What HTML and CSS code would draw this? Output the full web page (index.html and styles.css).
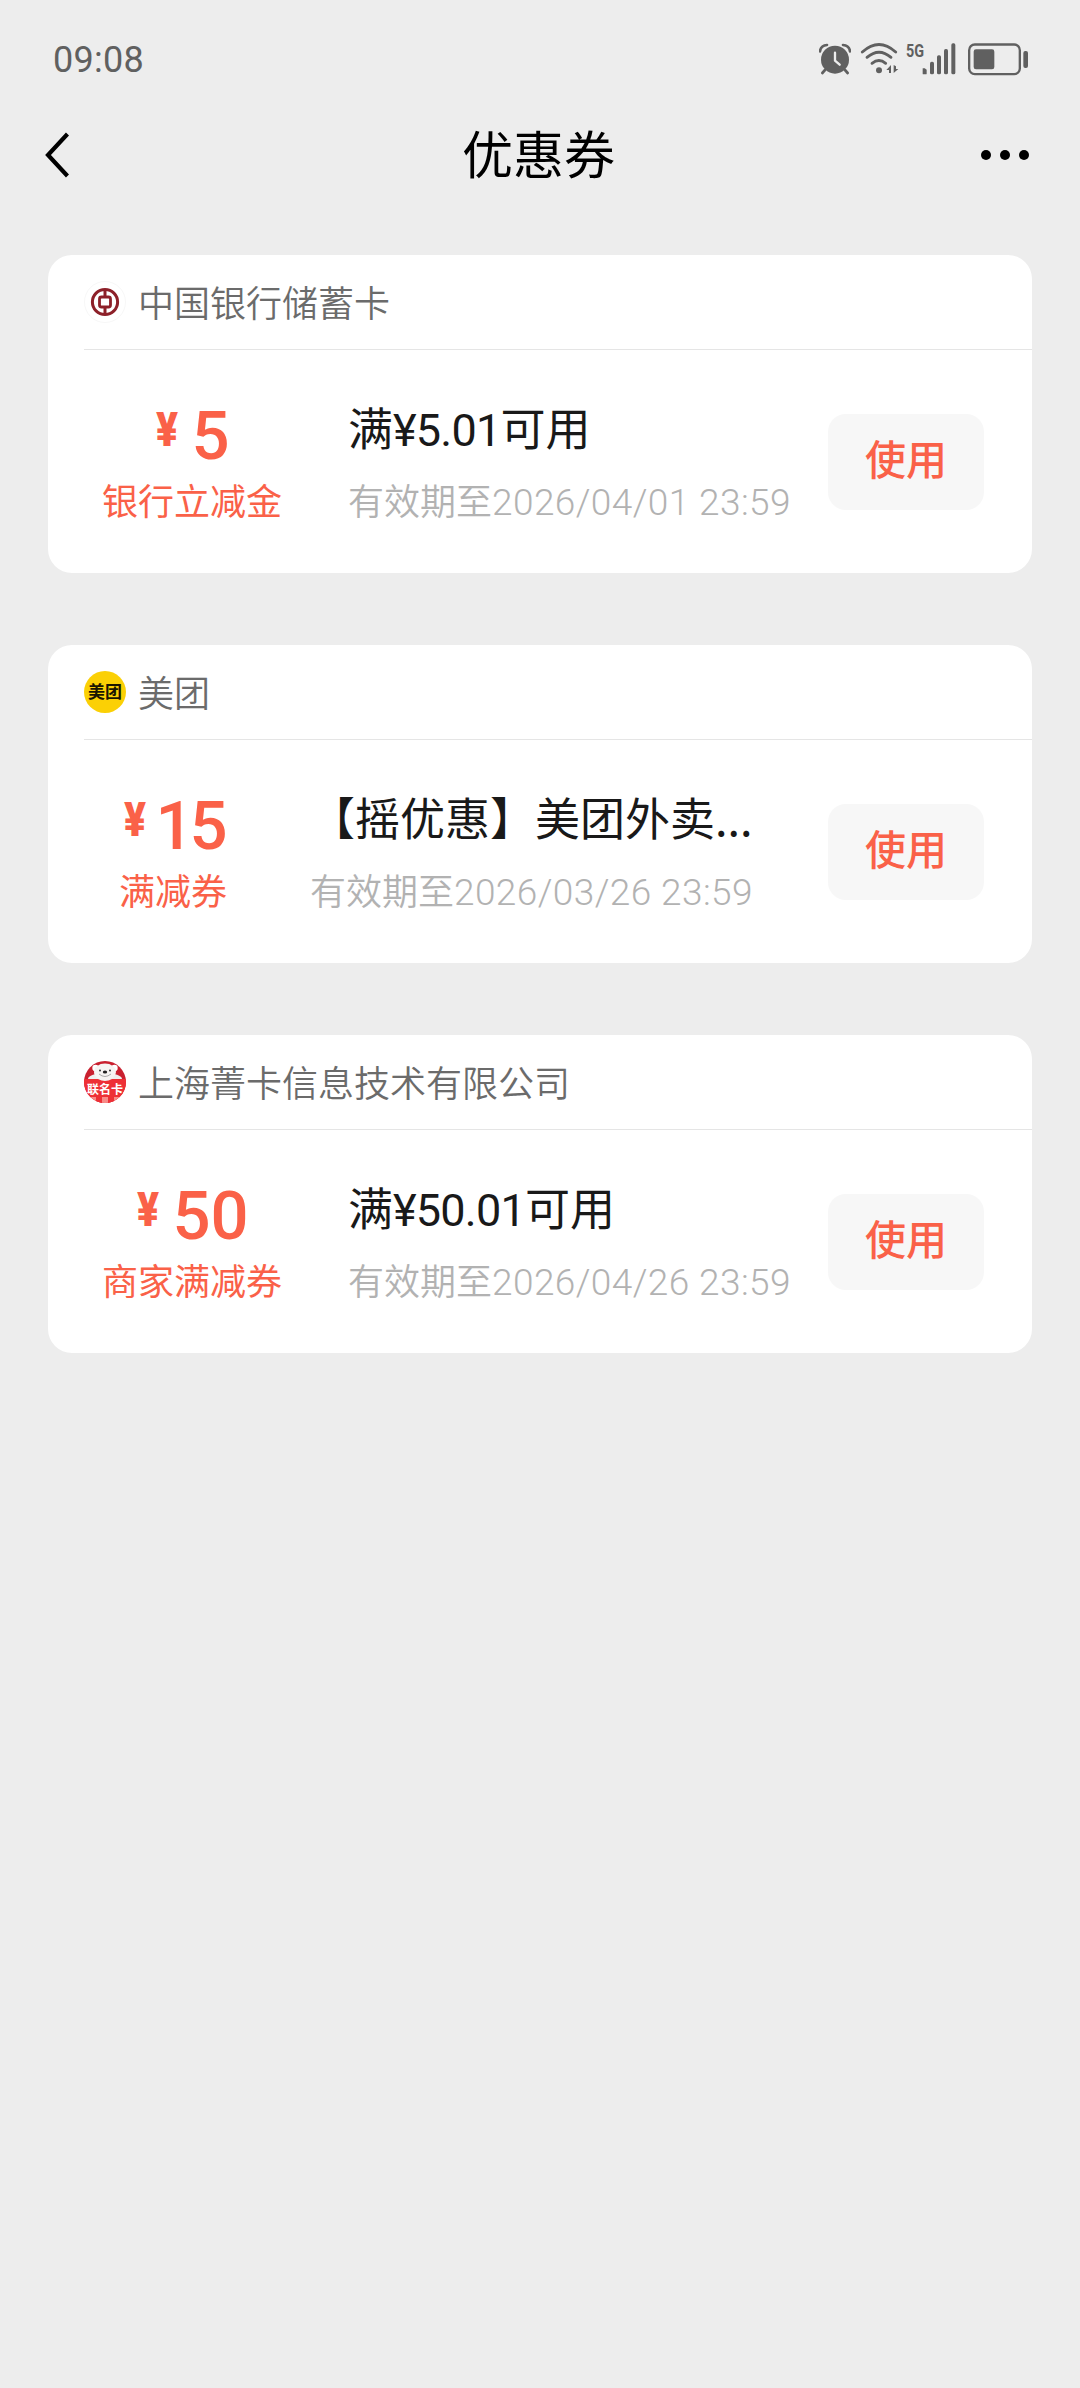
FILE: index.html
```html
<!DOCTYPE html>
<html lang="zh-CN">
<head>
<meta charset="utf-8">
<title>优惠券</title>
<link rel="stylesheet" href="styles.css">
</head>
<body>
<div class="status-bar">
  <span class="time">09:08</span>
  <div class="status-icons">
    <svg class="alarm" viewBox="54 40 96 96" width="32" height="32">
      <circle cx="102" cy="90" r="42" fill="#606060"/>
      <path d="M57 65Q59 48 78 46M147 65Q145 48 126 46" fill="none" stroke="#606060" stroke-width="8" stroke-linecap="round"/>
      <path d="M72 121L64 130M132 121L140 130" stroke="#606060" stroke-width="8" stroke-linecap="round"/>
      <path d="M102 69V93L116 105" fill="none" stroke="#ededed" stroke-width="7" stroke-linecap="round" stroke-linejoin="round"/>
    </svg>
    <svg class="wifi" viewBox="177 37 117 99" width="39" height="33">
      <g fill="none" stroke="#606060" stroke-width="8.500" stroke-linecap="round">
        <path d="M184 67Q234 22 284 67"/>
        <path d="M198 83Q234 52 270 83"/>
        <path d="M213 101Q234 84 254 101"/>
      </g>
      <circle cx="234" cy="122" r="9" fill="#606060"/>
      <path d="M270 106V130H264V121H256ZM278 106V130L292 118H285V110Z" fill="#606060"/>
    </svg>
    <span class="network">5G</span>
    <svg class="signal" viewBox="366 39 102 96" width="34" height="32">
      <g fill="#606060">
        <path d="M368 115H374L380 119V131Q380 133 378 133H370Q368 133 368 131Z"/>
        <rect x="390" y="95" width="12" height="38" rx="5"/>
        <rect x="411" y="76" width="12" height="57" rx="5"/>
        <rect x="432" y="57" width="12" height="76" rx="5"/>
        <rect x="454" y="40" width="12" height="93" rx="5"/>
      </g>
    </svg>
    <svg class="battery" viewBox="504 39 183 99" width="61" height="33">
      <rect x="507.500" y="43.500" width="152" height="89" rx="17" fill="none" stroke="#606060" stroke-width="7"/>
      <rect x="521" y="58" width="62" height="60" rx="7" fill="#606060"/>
      <rect x="670" y="63" width="14" height="51" rx="6" fill="#606060"/>
    </svg>
  </div>
</div>

<header class="nav">
  <svg class="back" viewBox="0 0 24 46" width="24" height="46"><path d="M22.500 2L3 23L22.500 44" fill="none" stroke="#000" stroke-width="4.200"/></svg>
  <h1>优惠券</h1>
  <div class="more"><i></i><i></i><i></i></div>
</header>

<main class="coupons">
  <section class="coupon">
    <div class="merchant">
      <svg class="logo" viewBox="0 0 42 42" width="42" height="42">
        <circle cx="21" cy="21" r="20.500" fill="#fff" stroke="#f7f7f7"/>
        <g fill="none" stroke="#8d2029">
          <circle cx="21" cy="21" r="12.600" stroke-width="3"/>
          <rect x="15.500" y="16" width="11" height="10" rx="2" stroke-width="2.800"/>
          <path d="M21 8V16M21 26V34" stroke-width="3"/>
        </g>
      </svg>
      <span class="name">中国银行储蓄卡</span>
    </div>
    <div class="body">
      <div class="value">
        <div class="amount"><span class="yen">¥</span><span class="num">5</span></div>
        <div class="kind">银行立减金</div>
      </div>
      <div class="info">
        <div class="title">满<span class="latin">¥5.01</span>可用</div>
        <div class="expiry">有效期至<span class="latin">2026/04/01 23:59</span></div>
      </div>
      <button class="use">使用</button>
    </div>
  </section>

  <section class="coupon">
    <div class="merchant">
      <svg class="logo" viewBox="0 0 42 42" width="42" height="42">
        <circle cx="21" cy="21" r="21" fill="#fbd005"/>
        <text x="21" y="26.500" class="logo-text meituan">美团</text>
      </svg>
      <span class="name">美团</span>
    </div>
    <div class="body">
      <div class="value">
        <div class="amount"><span class="yen">¥</span><span class="num tight">15</span></div>
        <div class="kind">满减券</div>
      </div>
      <div class="info">
        <div class="title">【摇优惠】美团外卖...</div>
        <div class="expiry">有效期至<span class="latin">2026/03/26 23:59</span></div>
      </div>
      <button class="use">使用</button>
    </div>
  </section>

  <section class="coupon">
    <div class="merchant">
      <svg class="logo" viewBox="0 0 42 42" width="42" height="42">
        <clipPath id="disc"><circle cx="21" cy="21" r="21"/></clipPath>
        <g clip-path="url(#disc)">
          <rect width="42" height="42" fill="#c9202f"/>
          <ellipse cx="21" cy="18" rx="17" ry="6" fill="#eee"/>
          <circle cx="11.500" cy="7" r="3.200" fill="#fff"/>
          <circle cx="30.500" cy="7" r="3.200" fill="#fff"/>
          <ellipse cx="21" cy="11" rx="11" ry="8.500" fill="#f6f4f3"/>
          <circle cx="16" cy="9.500" r="1" fill="#333"/>
          <circle cx="26" cy="9.500" r="1" fill="#333"/>
          <ellipse cx="21" cy="11" rx="2.200" ry="1.500" fill="#222"/>
          <path d="M15 13Q21 18 27 13" fill="none" stroke="#aaa" stroke-width="1"/>
          <path d="M0 18H14Q21 22 28 18H42V42H0Z" fill="#ee3036"/>
          <path d="M18 36H24V42H18ZM6 36H12V42H6ZM30 36H36V42H30Z" fill="#f88b88"/>
          <text x="21" y="33" class="logo-text card">联名卡</text>
        </g>
      </svg>
      <span class="name">上海菁卡信息技术有限公司</span>
    </div>
    <div class="body">
      <div class="value">
        <div class="amount"><span class="yen">¥</span><span class="num">50</span></div>
        <div class="kind">商家满减券</div>
      </div>
      <div class="info">
        <div class="title">满<span class="latin">¥50.01</span>可用</div>
        <div class="expiry">有效期至<span class="latin">2026/04/26 23:59</span></div>
      </div>
      <button class="use">使用</button>
    </div>
  </section>
</main>
</body>
</html>
```
FILE: styles.css
```css
* {
  box-sizing: border-box;
}

body {
  margin: 0;
  min-height: 2388px;
  background: #ededed;
  color: #191919;
  font-family: "Noto Sans CJK SC", sans-serif;
}

svg {
  display: block;
  flex: none;
}

.status-bar {
  display: flex;
  justify-content: space-between;
  height: 110px;
  padding: 43px 51px 0 53px;
}

.time {
  font: 400 36px/35px Roboto, sans-serif;
  letter-spacing: 0.3px;
  color: #606060;
}

.status-icons {
  display: flex;
  align-items: flex-start;
}

.wifi {
  margin-left: 9px;
  margin-top: -1px;
}

.network {
  width: 18px;
  margin-left: 7px;
  font: 700 18px/15px Roboto, sans-serif;
  color: #606060;
  transform: scaleX(0.8);
  transform-origin: left;
}

.signal {
  margin-left: -2px;
}

.battery {
  margin-left: 12px;
}

.nav {
  display: flex;
  align-items: center;
  justify-content: space-between;
  height: 90px;
  padding: 0 51px 0 45px;
}

.nav h1 {
  margin: 0;
  padding: 0 0 6px 27px;
  font-size: 51px;
  font-weight: 400;
  line-height: 60px;
  color: #000;
}

.more {
  display: flex;
  gap: 9px;
}

.more i {
  width: 10px;
  height: 10px;
  border-radius: 50%;
  background: #000;
}

.coupons {
  display: flex;
  flex-direction: column;
  gap: 72px;
  padding: 55px 48px 0;
}

.coupon {
  height: 318px;
  border-radius: 24px;
  background: #fff;
}

.merchant {
  display: flex;
  align-items: center;
  gap: 12px;
  height: 95px;
  margin-left: 36px;
  border-bottom: 1px solid #e5e5e5;
  font-size: 36px;
  font-weight: 350;
  line-height: 42px;
  color: #6b6b6b;
}

.name {
  padding-bottom: 3px;
}

.body {
  display: flex;
  align-items: flex-start;
  padding: 50px 48px 0 54px;
}

.value {
  min-width: 142px;
  text-align: center;
  color: #fa6148;
}

.amount {
  display: flex;
  justify-content: center;
  gap: 11px;
  height: 78px;
  font-family: Roboto, sans-serif;
}

.yen {
  font-size: 48px;
  font-weight: 900;
  line-height: 59px;
  transform: scaleX(0.85);
}

.num {
  font-size: 67px;
  font-weight: 500;
  line-height: 73px;
}

.num.tight {
  margin-left: -4px;
  letter-spacing: -4px;
}

.kind {
  font-size: 36px;
  line-height: 42px;
}

.info {
  margin-left: 66px;
  white-space: nowrap;
}

.latin {
  font-family: Roboto, sans-serif;
}

.title {
  height: 78px;
  font-size: 45px;
  line-height: 53px;
}

.title .latin {
  letter-spacing: -0.8px;
}

.expiry {
  font-size: 36px;
  font-weight: 350;
  line-height: 42px;
  color: #b2b2b2;
}

.expiry .latin {
  font-size: 37px;
  letter-spacing: 0.4px;
}

.use {
  width: 156px;
  height: 96px;
  margin: 14px 0 0 auto;
  padding: 0 0 10px;
  border: 0;
  border-radius: 18px;
  background: #f7f7f7;
  color: #fa6148;
  font: 500 41px/86px "Noto Sans CJK SC", sans-serif;
}

.logo-text {
  text-anchor: middle;
  font-family: "Noto Sans CJK SC", sans-serif;
  font-weight: 700;
}

.meituan {
  font-size: 17px;
  fill: #1a1500;
}

.card {
  font-size: 12px;
  fill: #fff;
}
```
